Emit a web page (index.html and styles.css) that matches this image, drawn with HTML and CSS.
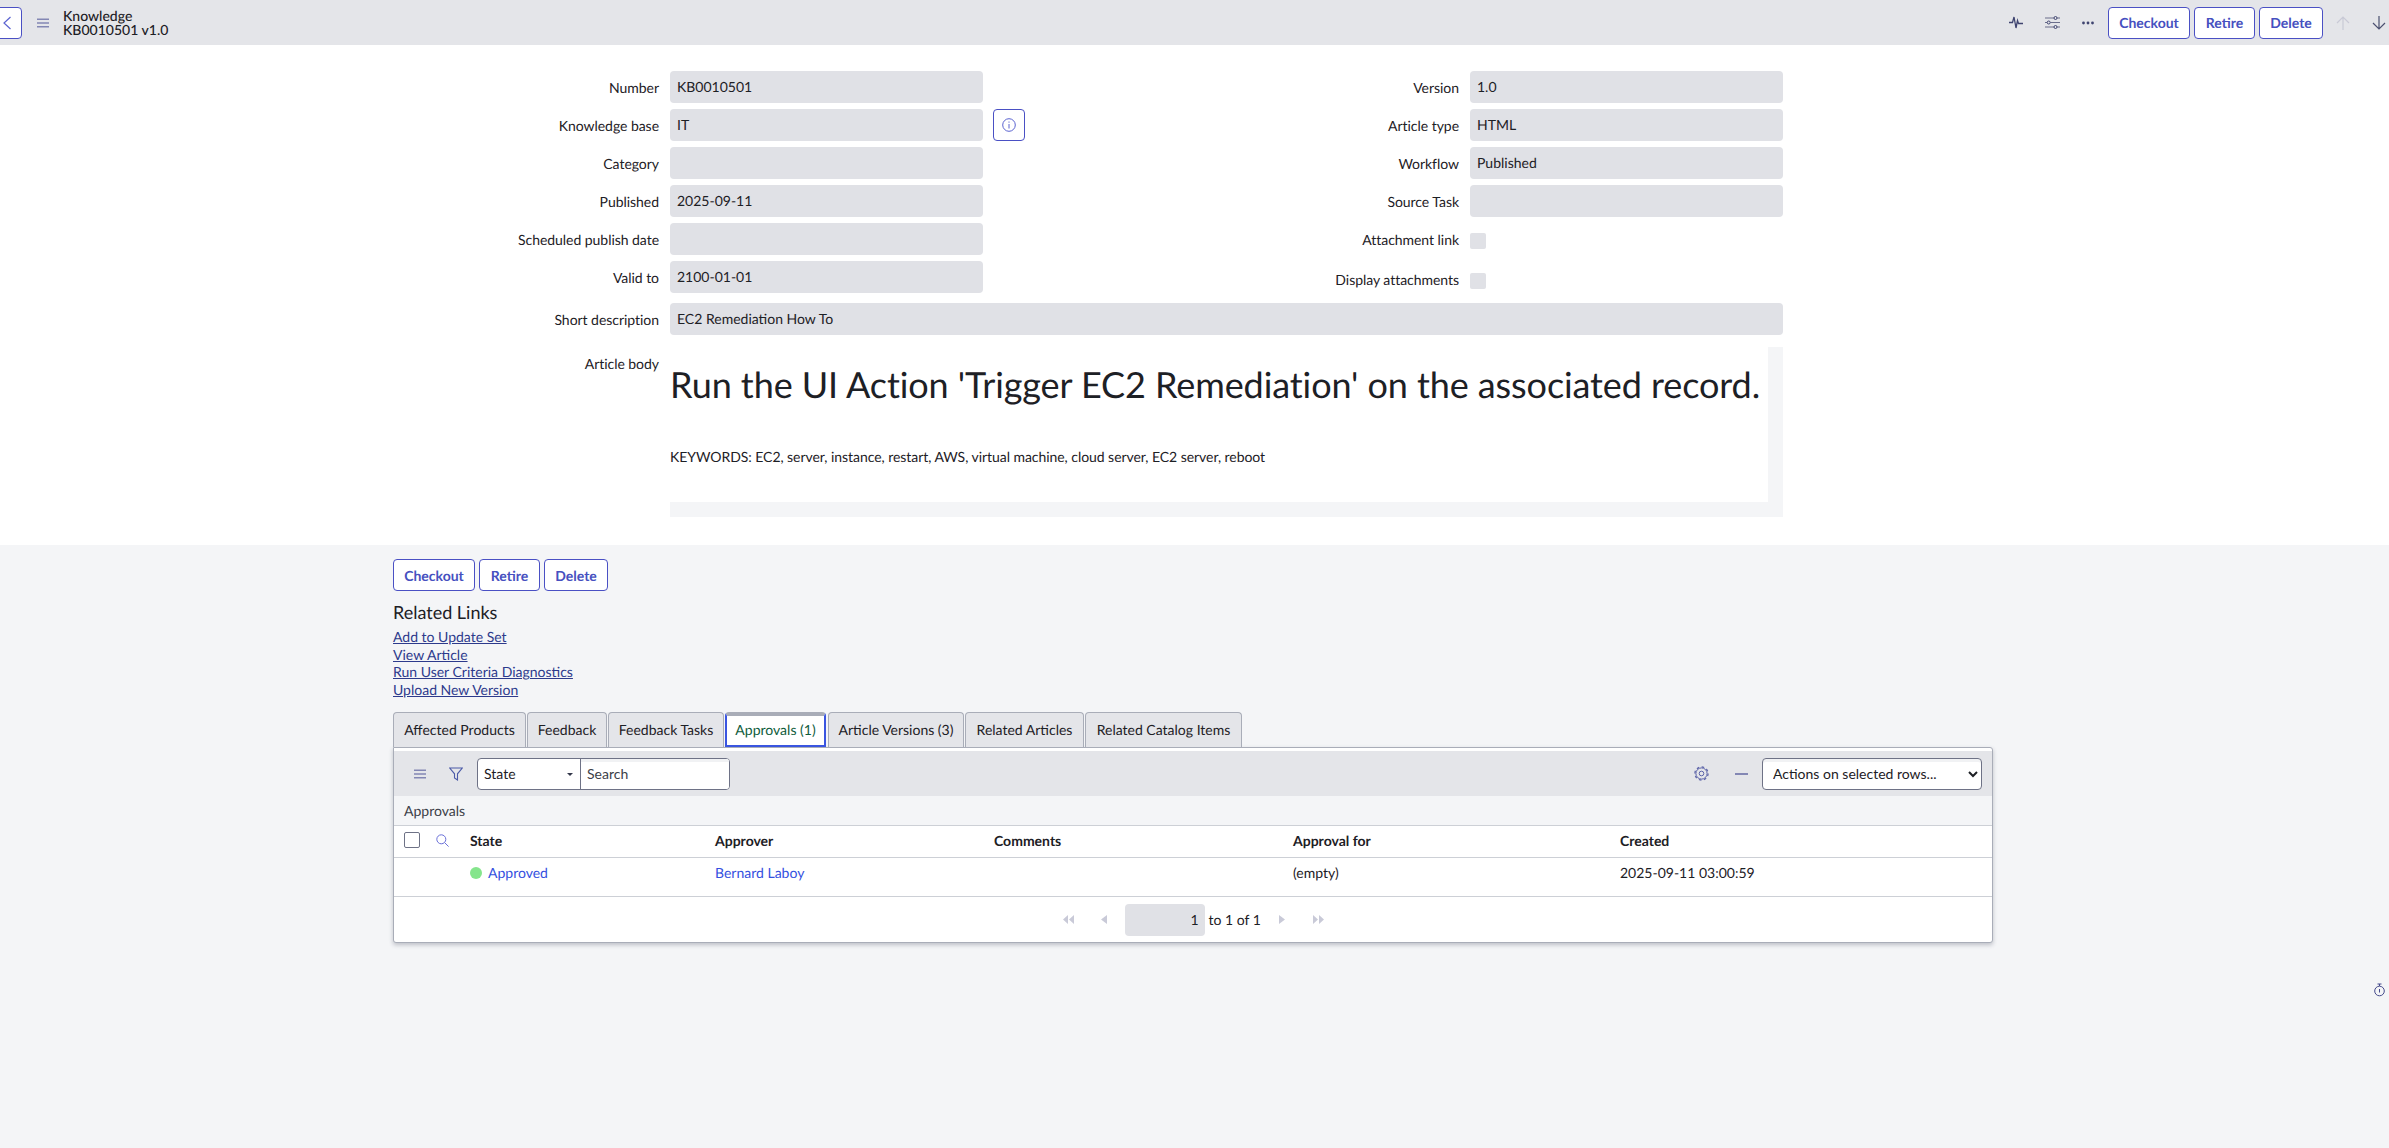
FILE: index.html
```html
<!DOCTYPE html>
<html lang="en">
  <head>
    <meta charset="UTF-8" />
    <meta name="viewport" content="width=device-width, initial-scale=1.0" />
    <title>Knowledge KB0010501 v1.0</title>
    <link rel="stylesheet" href="styles.css">
  </head>
  <body>
    <header class="top-bar">
      <button class="btn back-btn" type="button" aria-label="Back">
        <svg width="10" height="14" viewBox="0 0 10 14"><path d="M8.5 1 2 7l6.5 6" fill="none" stroke="#5b63d0" stroke-width="1.2"/></svg>
      </button>
      <svg class="menu-icon" width="12" height="10" viewBox="0 0 12 10"><path d="M0 1.2h12M0 5h12M0 8.800h12" stroke="#8387b4" stroke-width="1.5"/></svg>
      <div class="record-title">Knowledge<br>KB0010501 v1.0</div>
      <div class="top-actions">
        <span class="icon-btn">
          <svg width="14" height="13" viewBox="0 0 14 13"><path d="M0 6.500h3.500L5 1l2 11 1.500-7.500 1 3H14" fill="none" stroke="#3f4470" stroke-width="1.300"/></svg>
        </span>
        <span class="icon-btn">
          <svg width="15" height="13" viewBox="0 0 15 13"><path d="M0 2h9M12 2h3M0 6.500h2M5.500 6.500H15M0 11h9M12 11h3" stroke="#6b6f8c" stroke-width="1.200"/><circle cx="10.500" cy="2" r="1.500" fill="none" stroke="#3f4470"/><circle cx="3.700" cy="6.500" r="1.500" fill="none" stroke="#3f4470"/><circle cx="10.500" cy="11" r="1.500" fill="none" stroke="#3f4470"/></svg>
        </span>
        <span class="icon-btn">
          <svg width="12" height="4" viewBox="0 0 12 4"><circle cx="1.500" cy="2" r="1.400" fill="#3f4470"/><circle cx="6" cy="2" r="1.400" fill="#3f4470"/><circle cx="10.500" cy="2" r="1.400" fill="#3f4470"/></svg>
        </span>
        <button class="btn btn-checkout" type="button">Checkout</button>
        <button class="btn btn-retire" type="button">Retire</button>
        <button class="btn btn-delete" type="button">Delete</button>
        <span class="nav-arrow nav-arrow-first">
          <svg width="14" height="14" viewBox="0 0 14 14"><path d="M7 14V1M1 7l6-6 6 6" fill="none" stroke="#c9cad6" stroke-width="1.200"/></svg>
        </span>
        <span class="nav-arrow">
          <svg width="14" height="14" viewBox="0 0 14 14"><path d="M7 0v13M1 7l6 6 6-6" fill="none" stroke="#4b5070" stroke-width="1.200"/></svg>
        </span>
      </div>
    </header>

    <section class="form-area">
      <div class="form-cols">
        <div class="form-col">
          <div class="form-row"><label class="field-label">Number</label><div class="field">KB0010501</div></div>
          <div class="form-row">
            <label class="field-label">Knowledge base</label><div class="field">IT</div>
            <button class="btn info-btn" type="button" aria-label="Info">
              <svg width="14" height="14" viewBox="0 0 14 14"><circle cx="7" cy="7" r="6.300" fill="none" stroke="#5b63d0"/><path d="M7 6v4.500M7 3.500v1.200" stroke="#5b63d0"/></svg>
            </button>
          </div>
          <div class="form-row"><label class="field-label">Category</label><div class="field"></div></div>
          <div class="form-row"><label class="field-label">Published</label><div class="field">2025-09-11</div></div>
          <div class="form-row"><label class="field-label">Scheduled publish date</label><div class="field"></div></div>
          <div class="form-row"><label class="field-label">Valid to</label><div class="field">2100-01-01</div></div>
        </div>
        <div class="form-col">
          <div class="form-row"><label class="field-label">Version</label><div class="field">1.0</div></div>
          <div class="form-row"><label class="field-label">Article type</label><div class="field">HTML</div></div>
          <div class="form-row"><label class="field-label">Workflow</label><div class="field">Published</div></div>
          <div class="form-row"><label class="field-label">Source Task</label><div class="field"></div></div>
          <div class="form-row check-row"><label class="field-label">Attachment link</label><span class="check-box"></span></div>
          <div class="form-row check-row"><label class="field-label">Display attachments</label><span class="check-box"></span></div>
        </div>
      </div>
      <div class="form-row wide-row"><label class="field-label">Short description</label><div class="field">EC2 Remediation How To</div></div>
      <div class="article-row">
        <label class="field-label article-label">Article body</label>
        <div class="article-frame">
          <div class="article-body">
            <h1>Run the UI Action 'Trigger EC2 Remediation' on the associated record.</h1>
            <p>KEYWORDS: EC2, server, instance, restart, AWS, virtual machine, cloud server, EC2 server, reboot</p>
          </div>
        </div>
      </div>
    </section>

    <section class="related">
      <div class="bottom-btns">
        <button class="btn btn-checkout" type="button">Checkout</button>
        <button class="btn btn-retire" type="button">Retire</button>
        <button class="btn btn-delete" type="button">Delete</button>
      </div>
      <h2>Related Links</h2>
      <ul class="link-list">
        <li><a href="#">Add to Update Set</a></li>
        <li><a href="#">View Article</a></li>
        <li><a href="#">Run User Criteria Diagnostics</a></li>
        <li><a href="#">Upload New Version</a></li>
      </ul>

      <div class="tabs">
        <span class="tab tab-1">Affected Products</span>
        <span class="tab tab-2">Feedback</span>
        <span class="tab tab-3">Feedback Tasks</span>
        <span class="tab tab-4 tab-active">Approvals (1)</span>
        <span class="tab tab-5">Article Versions (3)</span>
        <span class="tab tab-6">Related Articles</span>
        <span class="tab tab-7">Related Catalog Items</span>
      </div>

      <div class="panel">
        <div class="list-toolbar">
          <svg class="menu-icon" width="12" height="10" viewBox="0 0 12 10"><path d="M0 1.200h12M0 5h12M0 8.800h12" stroke="#8387b4" stroke-width="1.500"/></svg>
          <svg class="funnel-icon" width="14" height="14" viewBox="0 0 14 14"><path d="M.7 1h12.600L8.500 6.800V13L5.500 11V6.800z" fill="none" stroke="#4b5aa8" stroke-width="1.100"/></svg>
          <div class="search-group">
            <div class="search-field">State<span class="caret"></span></div>
            <input class="search-input" type="text" placeholder="Search">
          </div>
          <div class="toolbar-right">
            <svg class="gear-icon" width="15" height="15" viewBox="0 0 15 15"><circle cx="7.500" cy="7.500" r="5.600" fill="none" stroke="#5b62a8"/><circle cx="7.500" cy="7.500" r="6.600" fill="none" stroke="#5b62a8" stroke-width="1.200" stroke-dasharray="2.590 2.590"/><circle cx="7.500" cy="7.500" r="2.300" fill="none" stroke="#5b62a8"/></svg>
            <span class="minus-icon"></span>
            <select class="actions-select">
              <option>Actions on selected rows...</option>
            </select>
          </div>
        </div>
        <div class="list-title">Approvals</div>
        <table class="list-table">
          <colgroup>
            <col class="col-select">
            <col class="col-state">
            <col class="col-approver">
            <col class="col-comments">
            <col class="col-approval">
            <col>
          </colgroup>
          <thead>
            <tr>
              <th>
                <span class="head-tools">
                  <span class="list-check"></span>
                  <svg width="13" height="13" viewBox="0 0 13 13"><circle cx="5.300" cy="5.300" r="4.500" fill="none" stroke="#6a70d8"/><path d="m8.600 8.600 4 4" stroke="#6a70d8"/></svg>
                </span>
              </th>
              <th>State</th>
              <th>Approver</th>
              <th>Comments</th>
              <th>Approval for</th>
              <th>Created</th>
            </tr>
          </thead>
          <tbody>
            <tr>
              <td></td>
              <td><span class="state-dot"></span><a href="#">Approved</a></td>
              <td><a href="#">Bernard Laboy</a></td>
              <td></td>
              <td>(empty)</td>
              <td>2025-09-11 03:00:59</td>
            </tr>
          </tbody>
        </table>
        <div class="pager">
          <svg class="pager-first" width="11" height="9" viewBox="0 0 11 9"><path d="M5 0v9L0 4.500zM11 0v9L6 4.500z" fill="#c9cad8"/></svg>
          <svg class="pager-prev" width="6" height="9" viewBox="0 0 6 9"><path d="M6 0v9L0 4.500z" fill="#c9cad8"/></svg>
          <div class="pager-input">1</div>
          <span class="pager-text">to 1 of 1</span>
          <svg class="pager-next" width="6" height="9" viewBox="0 0 6 9"><path d="M0 0v9l6-4.500z" fill="#c9cad8"/></svg>
          <svg class="pager-last" width="11" height="9" viewBox="0 0 11 9"><path d="M0 0v9l5-4.500zM6 0v9l5-4.500z" fill="#c9cad8"/></svg>
        </div>
      </div>
    </section>

    <svg class="timer-icon" width="11" height="14" viewBox="0 0 11 14"><circle cx="5.500" cy="8" r="4.800" fill="none" stroke="#454a8c"/><path d="M3.500 1h4M5.500 1v2M5.500 6v3.500" stroke="#454a8c"/></svg>
  </body>
</html>
```

FILE: styles.css
```css
html,
body {
  height: 100%;
}
body {
  margin: 0;
  overflow: hidden;
  background-color: #f4f5f7;
  color: #1d2025;
  font-family: "Lato", "Liberation Sans", sans-serif;
  font-size: 14px;
  text-rendering: geometricPrecision;
}
.btn {
  box-sizing: border-box;
  height: 32px;
  padding: 0;
  background-color: white;
  border: 1px solid #4a50c4;
  border-radius: 4px;
  color: #4650c0;
  font-family: inherit;
  font-size: 14px;
  font-weight: 700;
  text-rendering: geometricPrecision;
}
.btn-checkout { width: 82px; }
.btn-retire { width: 61px; }
.btn-delete { width: 64px; }

/* top bar */
.top-bar {
  display: flex;
  align-items: center;
  height: 45px;
  background-color: #e4e5e9;
}
.back-btn {
  display: flex;
  align-items: center;
  justify-content: flex-end;
  flex: none;
  width: 32px;
  margin-left: -10px;
  padding: 0 9px 0 0;
}
.menu-icon {
  flex: none;
}
.top-bar .menu-icon {
  margin-left: 15px;
}
.record-title {
  margin-left: 14px;
  font-size: 14px;
  font-weight: 500;
  line-height: 14px;
}
.top-actions {
  display: flex;
  align-items: center;
  gap: 4px;
  margin-left: auto;
}
.icon-btn {
  display: flex;
  align-items: center;
  justify-content: center;
  width: 36px;
  margin-right: -4px;
}
.icon-btn:nth-child(3) {
  margin-right: -2px;
}
.nav-arrow {
  display: flex;
  justify-content: center;
  width: 20px;
  margin-left: 12px;
}
.nav-arrow-first {
  margin-left: 6px;
}

/* form */
.form-area {
  box-sizing: border-box;
  height: 500px;
  padding: 26px 0 0 400px;
  background-color: white;
}
.form-cols {
  display: flex;
}
.form-col {
  width: 800px;
}
.form-col + .form-col {
  width: 583px;
}
.form-row {
  display: flex;
  align-items: center;
  margin-bottom: 6px;
}
.field-label {
  flex: none;
  width: 259px;
  margin-right: 11px;
  padding-top: 2px;
  text-align: right;
  letter-spacing: -0.04px;
  line-height: 16px;
}
.field {
  box-sizing: border-box;
  flex: none;
  width: 313px;
  height: 32px;
  padding: 0 7px;
  background-color: #e0e1e6;
  border-radius: 4px;
  line-height: 32px;
}
.info-btn {
  display: flex;
  align-items: center;
  justify-content: center;
  width: 32px;
  margin-left: 10px;
}
.check-row {
  align-items: flex-start;
  height: 40px;
  margin-bottom: 0;
  padding-top: 10px;
  box-sizing: border-box;
}
.check-row .field-label {
  margin-top: -1px;
  padding-top: 0;
}
.check-box {
  width: 16px;
  height: 16px;
  background-color: #e0e1e6;
  border-radius: 2px;
}
.wide-row {
  width: 1383px;
}
.wide-row .field {
  flex: 1;
}
.article-row {
  display: flex;
  align-items: flex-start;
  width: 1383px;
  margin-top: 12px;
}
.article-label {
  padding-top: 9px;
}
.article-frame {
  box-sizing: border-box;
  width: 1113px;
  height: 170px;
  padding: 0 15px 15px 0;
  background-color: #f4f5f7;
}
.article-body {
  height: 100%;
  background-color: white;
  overflow: hidden;
}
.article-body h1 {
  margin: 15px 0 0;
  font-size: 36px;
  font-weight: 400;
  letter-spacing: -0.09px;
  line-height: 44px;
  white-space: nowrap;
}
.article-body p {
  margin: 42px 0 0;
  letter-spacing: -0.05px;
  line-height: 17px;
}

/* related section */
.related {
  width: 1600px;
  padding: 14px 0 0 393px;
}
.bottom-btns {
  display: flex;
  gap: 4px;
}
.related h2 {
  margin: 9px 0 0;
  font-size: 18px;
  font-weight: 400;
  line-height: 24px;
}
.link-list {
  margin: 4px 0 0;
  padding: 0;
  list-style: none;
  line-height: 17.5px;
}
.link-list a {
  color: #2d3a8c;
}

/* tabs */
.tabs {
  display: flex;
  margin-top: 14px;
  height: 35px;
}
.tab {
  box-sizing: border-box;
  height: 35px;
  margin-right: 1px;
  background-color: #e4e5e9;
  border: 1px solid #a9adb8;
  border-bottom: none;
  border-radius: 4px 4px 0 0;
  text-align: center;
  line-height: 33px;
}
.tab-1 { width: 133px; }
.tab-2 { width: 80px; }
.tab-3 { width: 116px; }
.tab-4 { width: 101px; margin-right: 2px; }
.tab-5 { width: 136px; }
.tab-6 { width: 119px; }
.tab-7 { width: 157px; margin-right: 0; }
.tab-active {
  background-color: white;
  border: 2px solid #3a55e0;
  border-top: 4px solid #a9adb8;
  color: #0f5c3c;
  line-height: 27px;
}

/* list panel */
.panel {
  box-sizing: border-box;
  height: 196px;
  background-color: white;
  border: 1px solid #a9adb8;
  border-radius: 0 3px 3px 3px;
  box-shadow: 0 2px 4px rgba(60, 65, 85, 0.3);
}
.list-toolbar {
  display: flex;
  align-items: center;
  box-sizing: border-box;
  height: 45px;
  margin-top: 3px;
  padding-left: 20px;
  background-color: #e4e5e9;
}
.funnel-icon {
  margin-left: 23px;
}
.search-group {
  display: flex;
  box-sizing: border-box;
  width: 253px;
  height: 32px;
  margin-left: 14px;
  background-color: white;
  border: 1px solid #6e7286;
  border-radius: 4px;
  overflow: hidden;
}
.search-field {
  position: relative;
  box-sizing: border-box;
  width: 103px;
  padding-left: 6px;
  border-right: 1px solid #6e7286;
  line-height: 29px;
}
.caret {
  position: absolute;
  top: 14px;
  right: 7px;
  border-top: 3px solid #33374a;
  border-left: 3px solid transparent;
  border-right: 3px solid transparent;
}
.search-input {
  flex: 1;
  min-width: 0;
  padding: 0 6px;
  background: white;
  border: none;
  box-shadow: inset 0 3px 0 #f1f2f4;
  font-family: inherit;
  font-size: 14px;
  color: #1d2025;
}
.search-input::placeholder {
  color: #3c4048;
  opacity: 1;
}
.toolbar-right {
  display: flex;
  align-items: center;
  margin-left: auto;
  margin-right: 10px;
}
.minus-icon {
  width: 13px;
  height: 2px;
  margin: 0 14px 0 26px;
  background-color: #8387b4;
}
.actions-select {
  box-sizing: border-box;
  width: 220px;
  height: 32px;
  padding-left: 6px;
  background-color: white;
  border: 1px solid #6e7286;
  border-radius: 4px;
  box-shadow: inset 0 3px 0 #f1f2f4;
  color: #1d2025;
  font-family: inherit;
  font-size: 14px;
}
.list-title {
  box-sizing: border-box;
  height: 30px;
  padding: 6px 0 0 10px;
  background-color: #f4f5f7;
  border-bottom: 1px solid #cdd0d6;
  color: #3c4048;
  line-height: 17px;
}
.list-table {
  width: 100%;
  border-collapse: collapse;
  table-layout: fixed;
}
.col-select { width: 76px; }
.col-state { width: 245px; }
.col-approver { width: 279px; }
.col-comments { width: 299px; }
.col-approval { width: 327px; }
.list-table th,
.list-table td {
  padding: 0;
  text-align: left;
  vertical-align: top;
  line-height: 17px;
}
.list-table th {
  height: 31px;
  padding-top: 6px;
  box-sizing: border-box;
  border-bottom: 1px solid #cdd0d6;
  font-weight: 700;
}
.list-table td {
  height: 39px;
  padding-top: 6px;
  box-sizing: border-box;
  border-bottom: 1px solid #cdd0d6;
}
.list-table a {
  color: #3450e0;
  text-decoration: none;
}
.head-tools {
  display: flex;
  align-items: center;
  gap: 16px;
  padding-left: 10px;
}
.list-check {
  box-sizing: border-box;
  width: 16px;
  height: 16px;
  background-color: white;
  border: 1px solid #6e7286;
  border-radius: 2px;
}
.state-dot {
  display: inline-block;
  width: 12px;
  height: 12px;
  margin-right: 6px;
  background-color: #85e58c;
  border-radius: 50%;
  vertical-align: -1px;
}
.pager {
  display: flex;
  align-items: center;
  justify-content: center;
  box-sizing: border-box;
  height: 44px;
  padding-top: 2px;
}
.pager-prev {
  margin-left: 27px;
}
.pager-input {
  box-sizing: border-box;
  width: 80px;
  height: 32px;
  margin-left: 18px;
  padding-right: 6px;
  background-color: #e0e1e6;
  border-radius: 4px;
  text-align: right;
  line-height: 32px;
}
.pager-text {
  width: 52px;
  margin-left: 4px;
  white-space: nowrap;
}
.pager-next {
  margin-left: 18px;
}
.pager-last {
  margin-left: 28px;
}
.timer-icon {
  position: absolute;
  top: 983px;
  left: 2374px;
}
```
